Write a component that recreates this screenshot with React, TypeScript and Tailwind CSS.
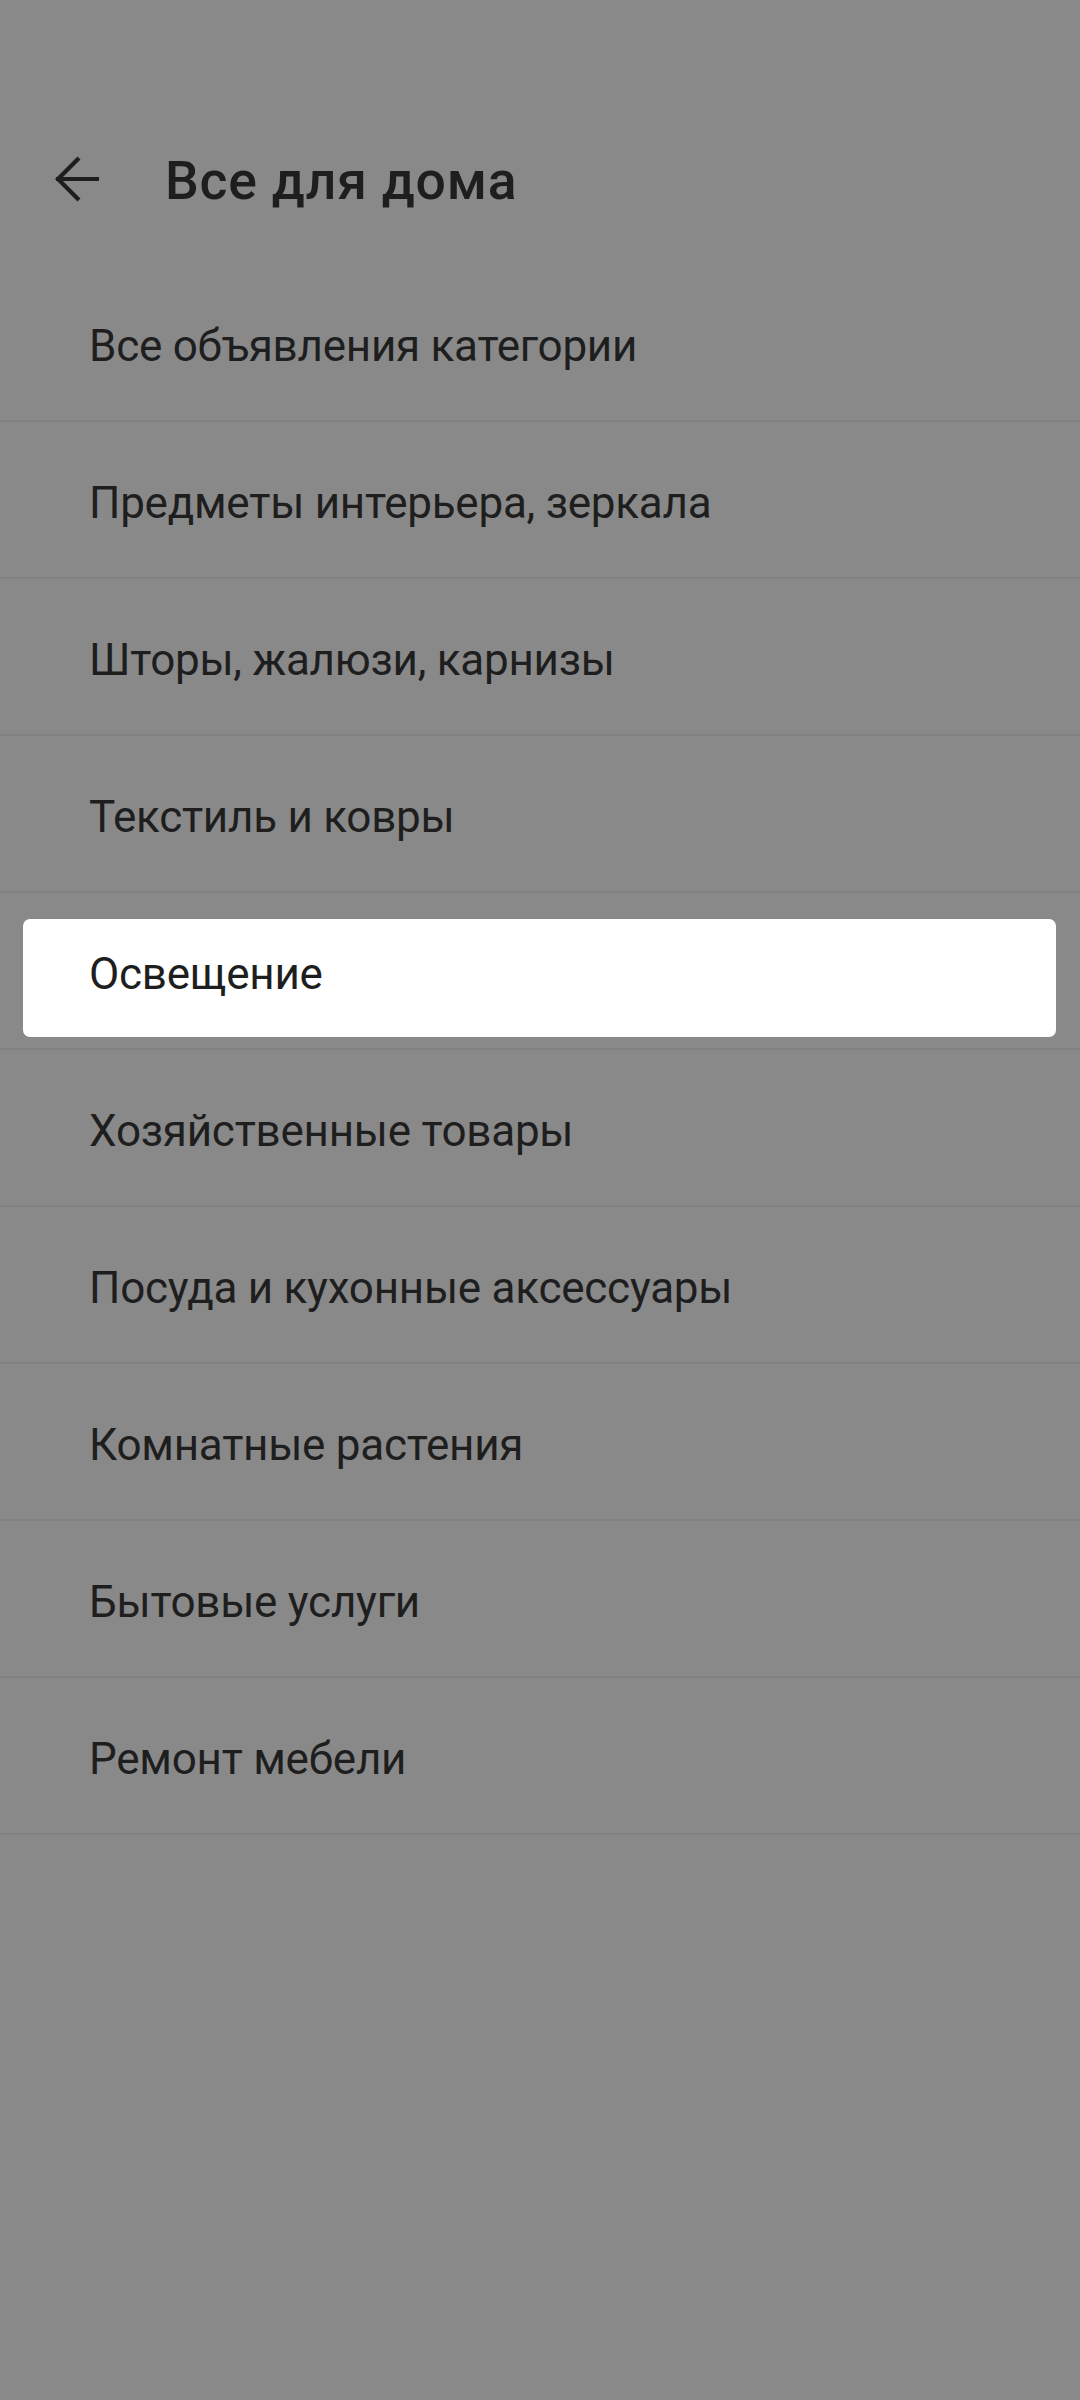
import React from "react";

const items = [
  "Все объявления категории",
  "Предметы интерьера, зеркала",
  "Шторы, жалюзи, карнизы",
  "Текстиль и ковры",
  "Освещение",
  "Хозяйственные товары",
  "Посуда и кухонные аксессуары",
  "Комнатные растения",
  "Бытовые услуги",
  "Ремонт мебели",
];

export default function App() {
  return (
    <div
      className="w-[1080px] h-[2400px] bg-[#898989] text-[#1e1e1e] overflow-hidden"
      style={{ fontFamily: "Roboto, 'Noto Sans', sans-serif" }}
    >
      <div className="h-[126px]" />
      <div className="h-[106px] flex items-center">
        <div className="w-[50px]" />
        <svg width="54" height="54" viewBox="0 0 54 54" className="shrink-0">
          <path d="M6 27H49" stroke="#1e1e1e" strokeWidth="4.2" fill="none" />
          <path
            d="M29 6L8 27L29 48"
            stroke="#1e1e1e"
            strokeWidth="4.2"
            fill="none"
            strokeLinejoin="miter"
          />
        </svg>
        <div className="pl-[61px] pt-[4px] text-[53.5px] font-medium leading-[60px] tracking-[0.8px]">
          Все для дома
        </div>
      </div>
      <div className="h-[33px]" />
      <div>
        {items.map((t, i) => (
          <div
            key={i}
            className="relative h-[157px] border-b-2 border-[#818181] flex items-center pt-[7px]"
          >
            {t === "Освещение" && (
              <div className="absolute left-[23px] right-[24px] top-[26px] bottom-[11px] bg-white rounded-[7px]" />
            )}
            <div className="relative pl-[89px] text-[44px] leading-[52px] tracking-[-0.25px]">{t}</div>
          </div>
        ))}
      </div>
    </div>
  );
}
